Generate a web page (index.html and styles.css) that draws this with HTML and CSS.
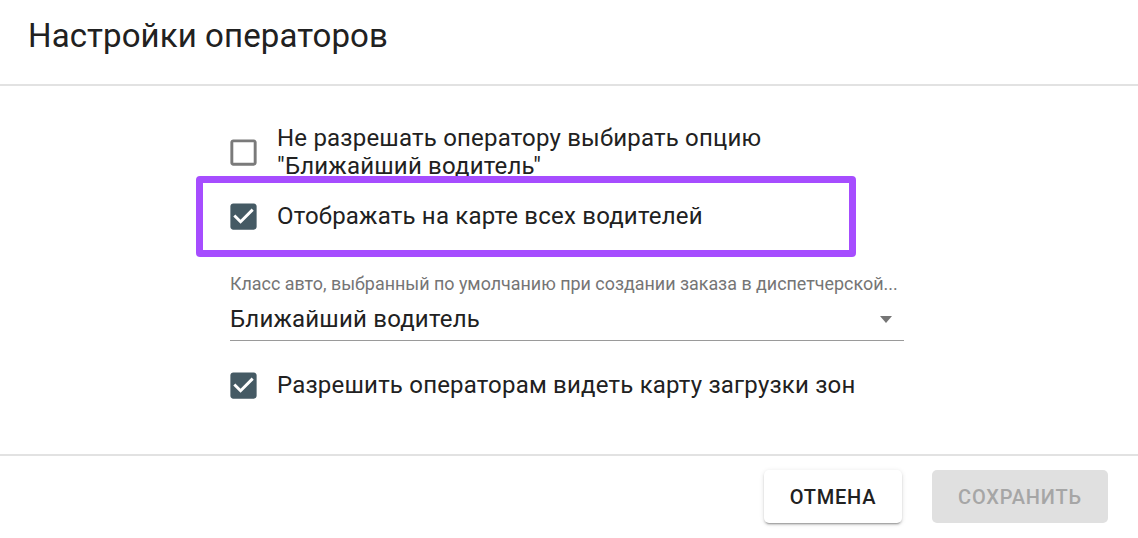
FILE: index.html
```html
<!DOCTYPE html>
<html lang="ru">
<head>
<meta charset="utf-8">
<title>Настройки операторов</title>
<link rel="stylesheet" href="styles.css">
</head>
<body>
<div class="dialog">
  <header class="dialog-title">Настройки операторов</header>
  <main class="dialog-content">
    <div class="form">
      <label class="check-row">
        <svg class="check-icon unchecked" viewBox="0 0 24 24"><path d="M19 5v14H5V5h14m0-2H5c-1.1 0-2 .9-2 2v14c0 1.1.9 2 2 2h14c1.1 0 2-.9 2-2V5c0-1.1-.9-2-2-2z"/></svg>
        <span class="check-label">Не разрешать оператору выбирать опцию<br>"Ближайший водитель"</span>
      </label>
      <label class="check-row row-second">
        <svg class="check-icon checked" viewBox="0 0 24 24"><path d="M19 3H5c-1.11 0-2 .9-2 2v14c0 1.1.89 2 2 2h14c1.11 0 2-.9 2-2V5c0-1.1-.89-2-2-2zm-9 14l-5-5 1.41-1.41L10 14.170l7.59-7.59L19 8l-9 9z"/></svg>
        <span class="check-label">Отображать на карте всех водителей</span>
        <span class="highlight"></span>
      </label>
      <div class="select-field">
        <div class="select-label">Класс авто, выбранный по умолчанию при создании заказа в диспетчерской...</div>
        <div class="select-input">
          <span class="select-value">Ближайший водитель</span>
          <span class="select-arrow"></span>
        </div>
      </div>
      <label class="check-row row-third">
        <svg class="check-icon checked" viewBox="0 0 24 24"><path d="M19 3H5c-1.11 0-2 .9-2 2v14c0 1.1.89 2 2 2h14c1.11 0 2-.9 2-2V5c0-1.1-.89-2-2-2zm-9 14l-5-5 1.41-1.41L10 14.17l7.59-7.590L19 8l-9 9z"/></svg>
        <span class="check-label">Разрешить операторам видеть карту загрузки зон</span>
      </label>
    </div>
  </main>
  <footer class="dialog-actions">
    <button class="btn btn-cancel">Отмена</button>
    <button class="btn btn-save" disabled>Сохранить</button>
  </footer>
</div>
</body>
</html>
```

FILE: styles.css
```css
* { box-sizing: border-box; }
html, body {
  margin: 0;
  padding: 0;
  background: #fff;
}
body {
  font-family: Roboto, "Liberation Sans", sans-serif;
  color: #212121;
}
.dialog {
  width: 1138px;
  height: 538px;
  display: flex;
  flex-direction: column;
}
.dialog-title {
  height: 86px;
  padding: 16px 0 0 28px;
  font-size: 33px;
  line-height: 40px;
  font-weight: 400;
  letter-spacing: 0.1px;
  border-bottom: 2px solid #e2e2e2;
}
.dialog-content {
  flex: 1;
  padding: 38px 0 0 230px;
}
.form {
  width: 674px;
  display: flex;
  flex-direction: column;
}
.check-row {
  position: relative;
  display: flex;
  align-items: center;
  min-height: 56px;
}
.row-second { margin-top: 8px; }
.row-third { margin-top: 16px; }
.check-icon {
  width: 35px;
  height: 35px;
  flex: none;
  margin-left: -4px;
  margin-right: 16px;
}
.check-icon.unchecked { fill: #7a7a7a; }
.check-icon.checked { fill: #455a64; }
.check-label {
  font-size: 24px;
  line-height: 28px;
  letter-spacing: 0.2px;
}
.highlight {
  position: absolute;
  left: -34px;
  top: -12px;
  right: 48px;
  bottom: -13px;
  border: 7px solid #a64dff;
  border-radius: 4px;
  pointer-events: none;
}
.select-field {
  margin-top: 29px;
}
.select-label {
  font-size: 17.9px;
  line-height: 22px;
  color: #757575;
  white-space: nowrap;
  overflow: hidden;
}
.select-input {
  display: flex;
  align-items: center;
  justify-content: space-between;
  margin-top: 10px;
  padding-bottom: 7px;
  border-bottom: 1.5px solid #9a9a9a;
}
.select-value {
  font-size: 24px;
  line-height: 28px;
  letter-spacing: 0.2px;
}
.select-arrow {
  width: 0;
  height: 0;
  border-left: 6.5px solid transparent;
  border-right: 6.5px solid transparent;
  border-top: 7px solid #757575;
  margin-right: 12px;
}
.dialog-actions {
  height: 84px;
  border-top: 2px solid #e2e2e2;
  display: flex;
  justify-content: flex-end;
  align-items: flex-start;
  gap: 30px;
  padding: 14px 30px 0 0;
}
.btn {
  height: 53px;
  border: none;
  border-radius: 5px;
  font-family: Roboto, "Liberation Sans", sans-serif;
  font-size: 20px;
  font-weight: 500;
  letter-spacing: 0.8px;
  text-transform: uppercase;
}
.btn-cancel {
  width: 138px;
  background: #fff;
  color: #212121;
  box-shadow: 0 3px 1px -2px rgba(0,0,0,0.2), 0 2px 2px 0 rgba(0,0,0,0.14), 0 1px 5px 0 rgba(0,0,0,0.12);
}
.btn-save {
  width: 176px;
  background: #e0e0e0;
  color: #a6a6a6;
}
```
